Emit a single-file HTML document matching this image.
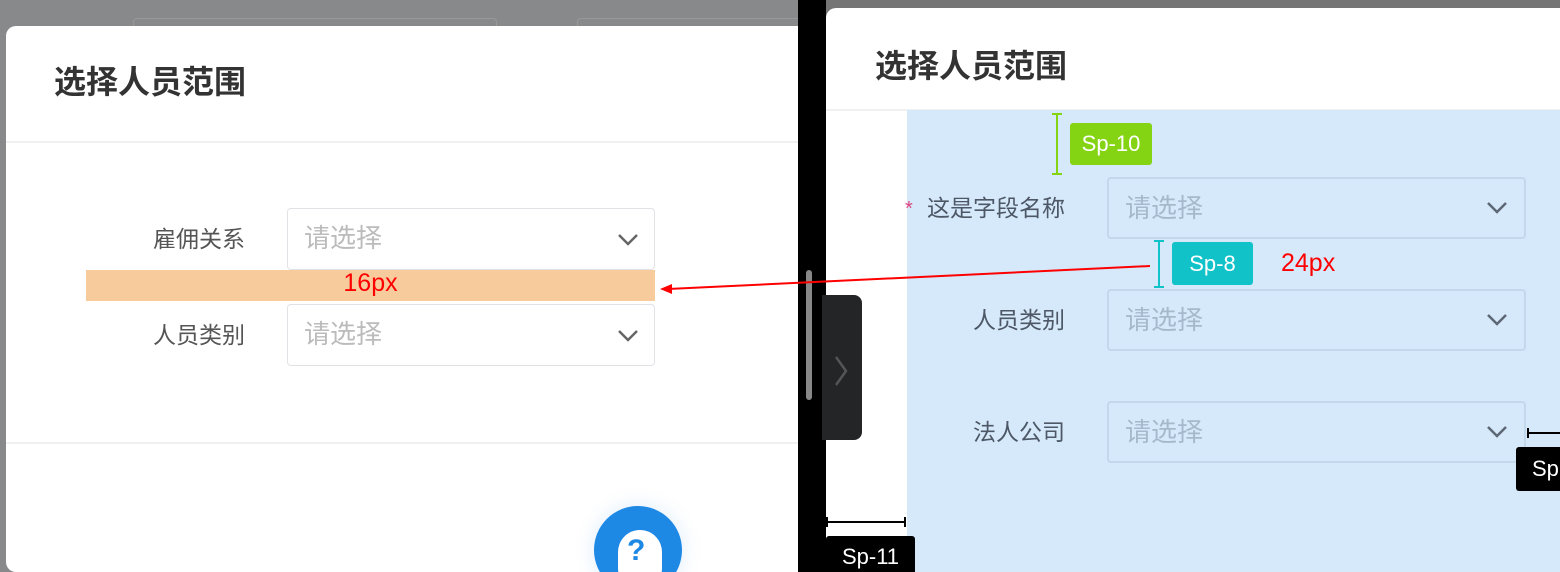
<!DOCTYPE html>
<html><head><meta charset="utf-8"><style>
*{margin:0;padding:0;box-sizing:border-box}
html,body{width:1560px;height:572px;overflow:hidden}
body{background:#fff;font-family:"Liberation Sans","Noto Sans CJK SC",sans-serif}
#w{position:relative;width:1560px;height:572px;overflow:hidden}
.a{position:absolute}
.sel{position:absolute;border-radius:4px;font-size:26px;padding-left:16px;line-height:58px}
.lab{position:absolute;font-size:23px;text-align:right;line-height:30px}
.tag{position:absolute;color:#fff;font-size:22px;text-align:center;border-radius:3px}
</style></head><body><div id="w">
<!-- left -->
<div class="a" style="left:0;top:0;width:798px;height:572px;background:#88898b"></div>
<div class="a" style="left:133px;top:18px;width:364px;height:20px;border:1px solid #999;border-radius:4px"></div>
<div class="a" style="left:577px;top:18px;width:240px;height:20px;border:1px solid #999;border-radius:4px"></div>
<div class="a" style="left:6px;top:26px;width:792px;height:546px;background:#fff;border-radius:10px 0 0 10px"></div>
<div class="a" style="left:54px;top:61px;font-size:32px;font-weight:bold;color:#333;line-height:42px">选择人员范围</div>
<div class="a" style="left:6px;top:141px;width:792px;height:2px;background:#f0f0f2"></div>
<div class="lab" style="left:95px;top:224px;width:150px;color:#555">雇佣关系</div>
<div class="sel" style="left:287px;top:208px;width:368px;height:62px;border:1px solid #e2e2e6;color:#bbb">请选择</div>
<svg class="a" style="left:617px;top:233px" width="22" height="14"><path d="M2 2 L11 11 L20 2" fill="none" stroke="#666" stroke-width="2.5"/></svg>
<div class="a" style="left:86px;top:270px;width:569px;height:31px;background:#f8cb9c;color:#f00;font-size:25px;text-align:center;line-height:26px">16px</div>
<div class="lab" style="left:95px;top:320px;width:150px;color:#555">人员类别</div>
<div class="sel" style="left:287px;top:304px;width:368px;height:62px;border:1px solid #e2e2e6;color:#bbb">请选择</div>
<svg class="a" style="left:617px;top:329px" width="22" height="14"><path d="M2 2 L11 11 L20 2" fill="none" stroke="#666" stroke-width="2.5"/></svg>
<div class="a" style="left:6px;top:442px;width:792px;height:2px;background:#f0f0f2"></div>
<div class="a" style="left:594px;top:506px;width:88px;height:88px;border-radius:50%;background:#1e88e5;box-shadow:0 0 20px rgba(30,136,229,.15)"></div>
<div class="a" style="left:618px;top:530px;width:44px;height:60px;border-radius:22px;background:#fff"></div>
<div class="a" style="left:627px;top:534px;font-size:30px;font-weight:bold;color:#1e88e5">?</div>
<!-- divider -->
<div class="a" style="left:798px;top:0;width:28px;height:572px;background:#000"></div>
<div class="a" style="left:806px;top:270px;width:6px;height:130px;background:#888;border-radius:3px"></div>
<!-- right -->
<div class="a" style="left:826px;top:0;width:734px;height:30px;background:#757575"></div>
<div class="a" style="left:826px;top:8px;width:734px;height:564px;background:#fff;border-radius:10px 0 0 0"></div>
<div class="a" style="left:875px;top:45px;font-size:32px;font-weight:bold;color:#333;line-height:42px">选择人员范围</div>
<div class="a" style="left:826px;top:109px;width:734px;height:2px;background:#f0f0f2"></div>
<div class="a" style="left:907px;top:110px;width:653px;height:462px;background:#d5e9fb"></div>
<div class="a" style="left:822px;top:295px;width:40px;height:145px;background:#232527;border-radius:0 8px 8px 0"></div>
<svg class="a" style="left:833px;top:355px" width="16" height="32"><path d="M3 2 L13 16 L3 30" fill="none" stroke="#555" stroke-width="2.5"/></svg>
<div class="a" style="left:1056px;top:113px;width:2px;height:62px;background:#84d414"></div>
<div class="a" style="left:1052px;top:113px;width:10px;height:2px;background:#84d414"></div>
<div class="a" style="left:1052px;top:173px;width:10px;height:2px;background:#84d414"></div>
<div class="tag" style="left:1070px;top:123px;width:82px;height:42px;line-height:42px;background:#84d414">Sp-10</div>
<div class="a" style="left:905px;top:198px;color:#e0457b;font-size:20px">*</div>
<div class="lab" style="left:915px;top:193px;width:150px;color:#4d5766">这是字段名称</div>
<div class="sel" style="left:1107px;top:177px;width:419px;height:62px;border:2px solid #c4d8ec;color:#a7b8cb">请选择</div>
<svg class="a" style="left:1486px;top:201px" width="22" height="14"><path d="M2 2 L11 11 L20 2" fill="none" stroke="#5d6775" stroke-width="2.5"/></svg>
<div class="a" style="left:1158px;top:240px;width:2px;height:48px;background:#12c2c9"></div>
<div class="a" style="left:1154px;top:240px;width:10px;height:2px;background:#12c2c9"></div>
<div class="a" style="left:1154px;top:286px;width:10px;height:2px;background:#12c2c9"></div>
<div class="tag" style="left:1172px;top:242px;width:81px;height:43px;line-height:43px;background:#12c2c9">Sp-8</div>
<div class="a" style="left:1281px;top:249px;color:#f00;font-size:25px">24px</div>
<div class="lab" style="left:915px;top:305px;width:150px;color:#4d5766">人员类别</div>
<div class="sel" style="left:1107px;top:289px;width:419px;height:62px;border:2px solid #c4d8ec;color:#a7b8cb">请选择</div>
<svg class="a" style="left:1486px;top:313px" width="22" height="14"><path d="M2 2 L11 11 L20 2" fill="none" stroke="#5d6775" stroke-width="2.5"/></svg>
<div class="lab" style="left:915px;top:417px;width:150px;color:#4d5766">法人公司</div>
<div class="sel" style="left:1107px;top:401px;width:419px;height:62px;border:2px solid #c4d8ec;color:#a7b8cb">请选择</div>
<svg class="a" style="left:1486px;top:425px" width="22" height="14"><path d="M2 2 L11 11 L20 2" fill="none" stroke="#5d6775" stroke-width="2.5"/></svg>
<div class="a" style="left:1527px;top:432px;width:33px;height:2px;background:#000"></div>
<div class="a" style="left:1527px;top:428px;width:2px;height:10px;background:#000"></div>
<div class="tag" style="left:1516px;top:447px;width:44px;height:44px;line-height:44px;background:#000;text-align:left;padding-left:16px;border-radius:3px 0 0 3px">Sp</div>
<div class="a" style="left:826px;top:521px;width:79px;height:2px;background:#000"></div>
<div class="a" style="left:826px;top:517px;width:2px;height:10px;background:#000"></div>
<div class="a" style="left:904px;top:517px;width:2px;height:10px;background:#000"></div>
<div class="tag" style="left:826px;top:536px;width:89px;height:36px;line-height:42px;background:#000;border-radius:3px 3px 0 0">Sp-11</div>
<svg class="a" style="left:0;top:0" width="1560" height="572"><line x1="1150" y1="266" x2="668" y2="289" stroke="#f00" stroke-width="2"/><path d="M660 289 L672 284 L672 294 Z" fill="#f00"/></svg>
</div></body></html>
